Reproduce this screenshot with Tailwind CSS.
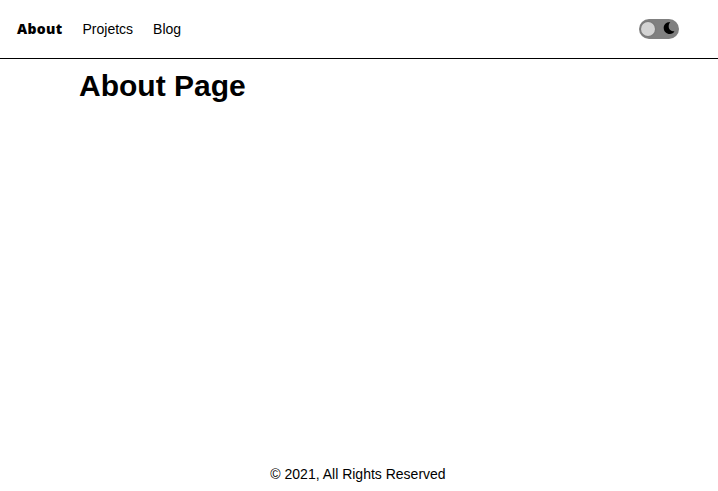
<!DOCTYPE html>
<html lang="en">
<head>
<meta charset="utf-8">
<title>About Page</title>
<script src="https://cdn.jsdelivr.net/npm/@tailwindcss/browser@4"></script>
</head>
<body class="flex h-screen flex-col overflow-hidden bg-white font-['Liberation_Sans',Arial,sans-serif] text-black">
<header class="flex h-[59px] shrink-0 items-center justify-between border-b border-black pr-[39px] pl-[17px]">
<nav class="flex gap-5 text-sm leading-5">
<a class="w-[45.5px] font-['Open_Sans',sans-serif] font-extrabold tracking-[0.3px]">About</a>
<a>Projetcs</a>
<a>Blog</a>
</nav>
<button aria-label="Toggle theme" class="flex h-5 w-10 items-center justify-between rounded-full bg-[#808080] pr-1 pl-0.5">
<span class="size-[14px] rounded-full bg-[#d3d3d3] shadow-[0_0_2px_#666]"></span>
<svg class="size-3 -translate-y-px" viewBox="0 0 12 12"><path d="M7.3 0C2.4 0 .7 3.3 .7 6C.7 9.5 3.5 12 6.7 12C9 12 10.7 10.9 11.4 9.2C8 9.3 5.7 7.3 5.7 4.4C5.7 2.5 6.2 1.1 7.3 0Z"/></svg>
</button>
</header>
<main class="flex-1 px-[79px] pt-[9px]"><h1 class="text-[30px] leading-9 font-bold">About Page</h1></main>
<footer class="flex h-[27px] shrink-0 justify-center pr-0.5 text-sm leading-5"><p>© 2021, All Rights Reserved</p></footer>
</body>
</html>
